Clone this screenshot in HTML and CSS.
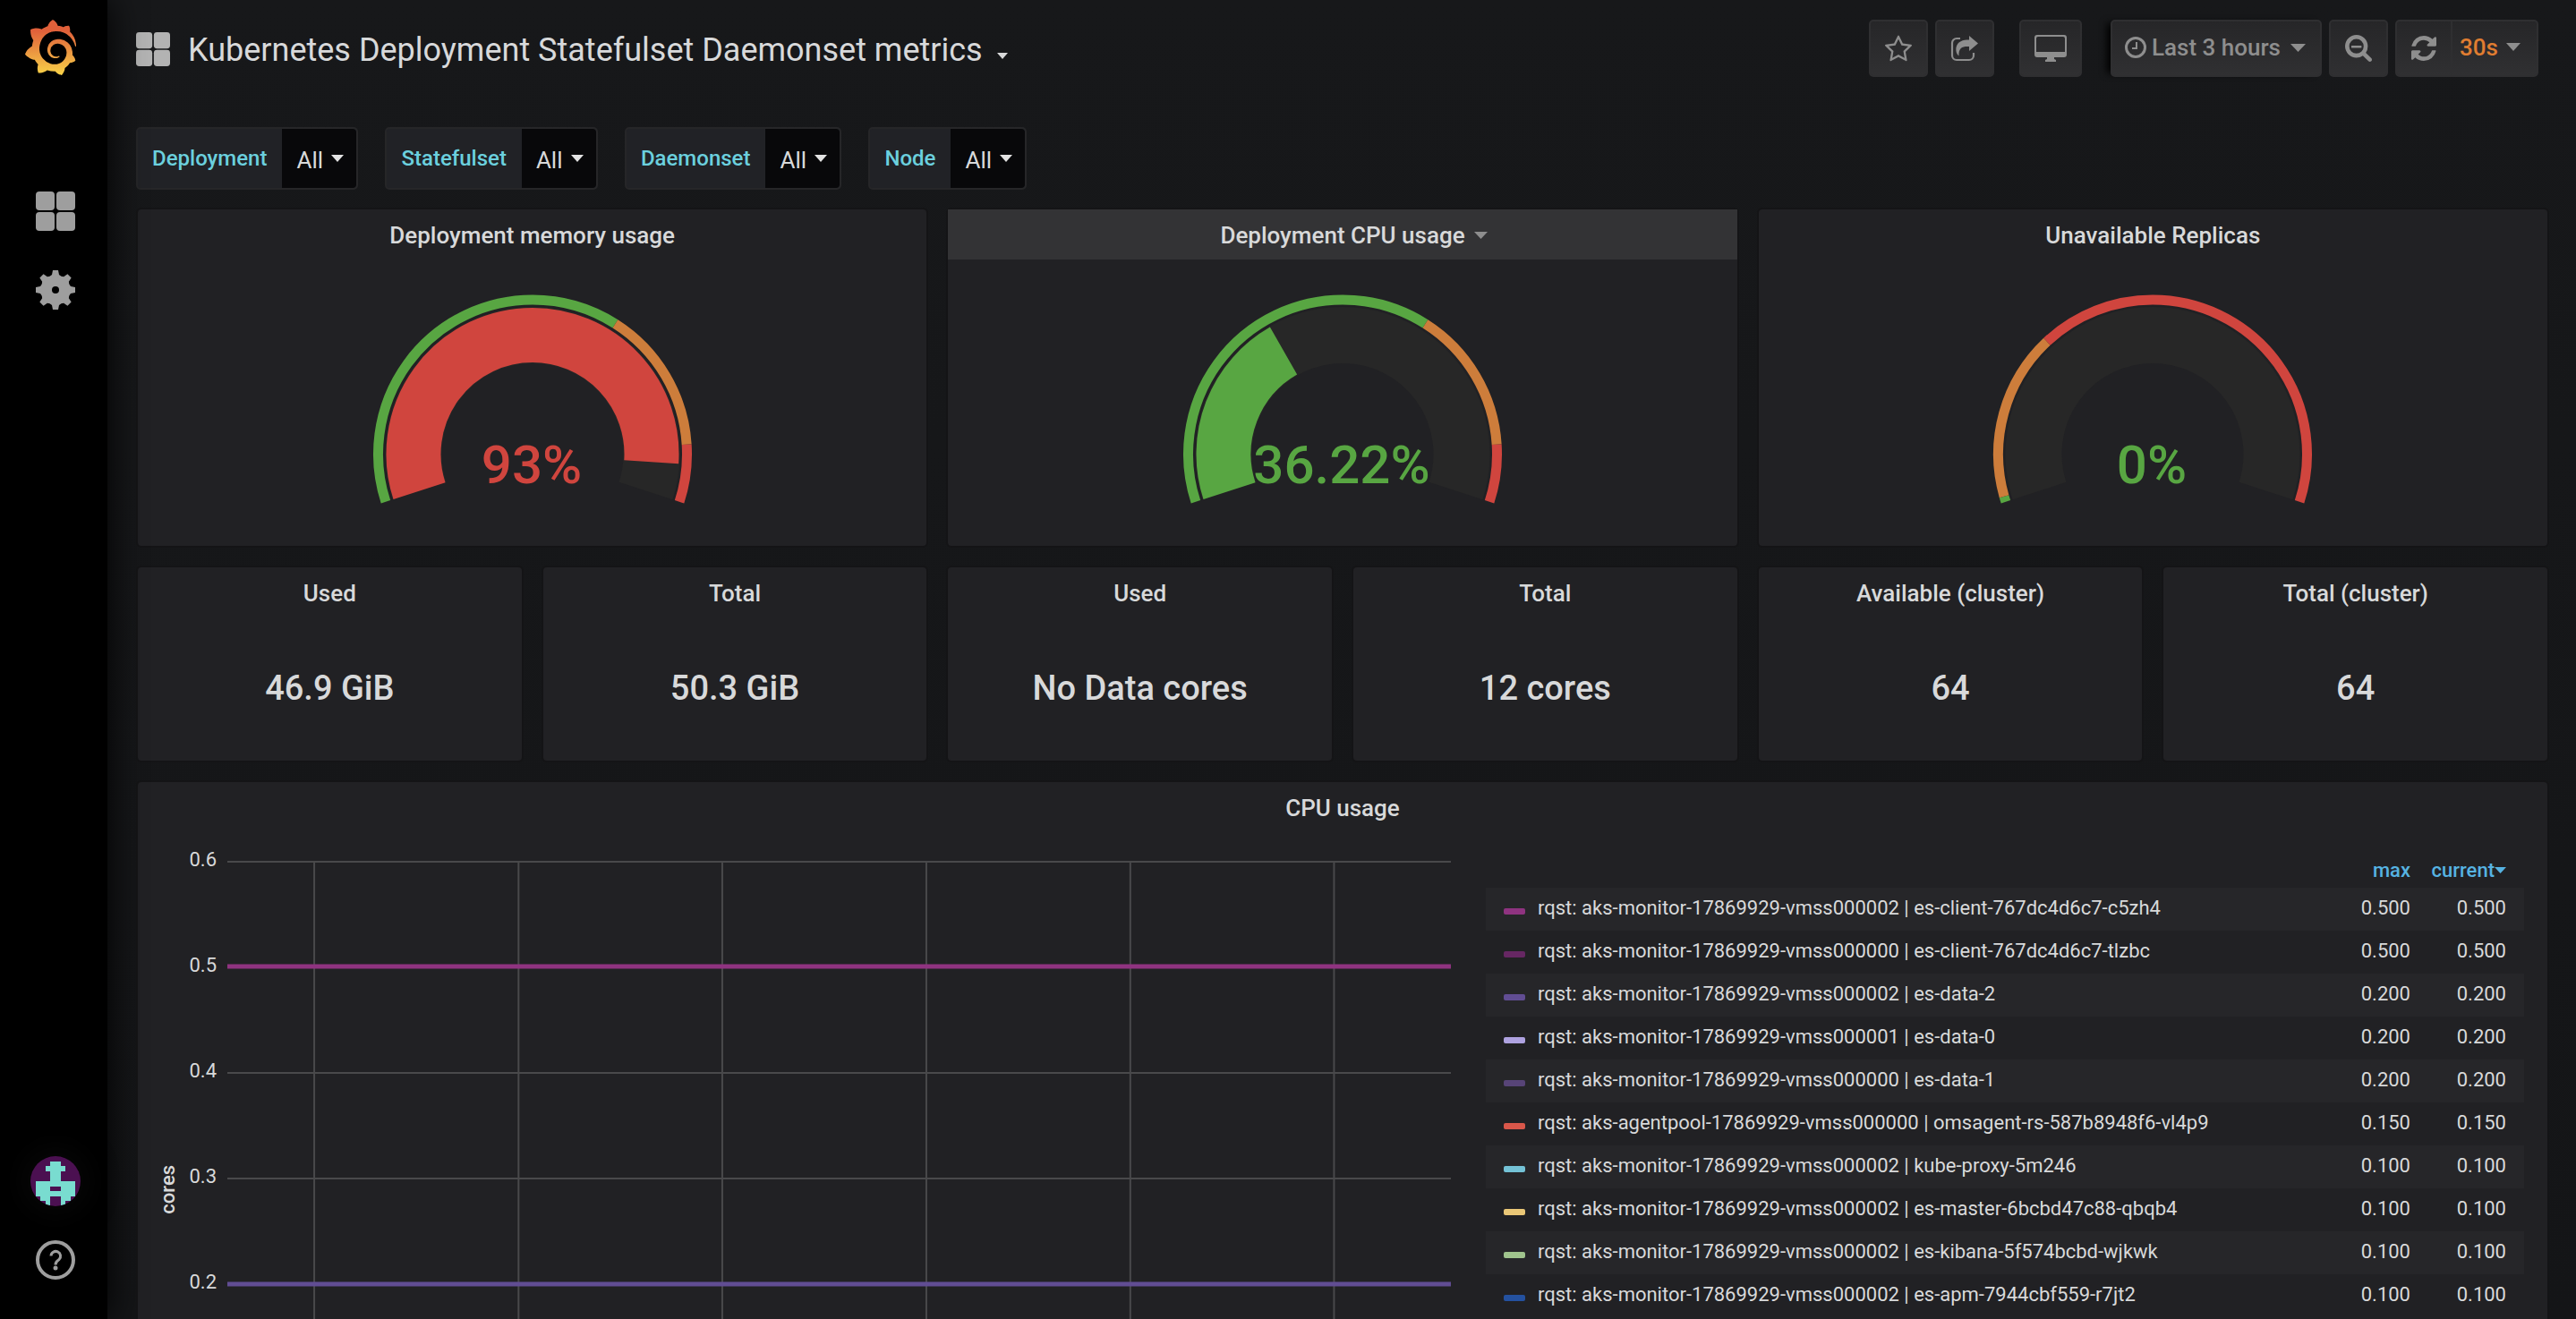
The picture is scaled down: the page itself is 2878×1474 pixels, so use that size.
FILE: index.html
```html
<!DOCTYPE html>
<html lang="en">
<head>
<meta charset="utf-8">
<title>Kubernetes Deployment Statefulset Daemonset metrics</title>
<link rel="stylesheet" href="styles.css">
</head>
<body>
<svg class="defs" aria-hidden="true">
  <symbol id="caret" viewBox="0 0 16 8" preserveAspectRatio="none"><path d="M0 0h16L8 8z"/></symbol>
  <symbol id="apps" viewBox="0 0 44 44"><rect width="21" height="21" rx="4"/><rect x="23" width="21" height="21" rx="4"/><rect y="23" width="21" height="21" rx="4"/><rect x="23" y="23" width="21" height="21" rx="4"/></symbol>
</svg>
<div class="app">
  <nav class="sidebar" aria-label="Main">
    <a href="#" class="side-link logo" aria-label="Home">
      <svg width="57" height="62" viewBox="0.95 0 22.1 24">
        <defs><linearGradient id="flame" x1="0" y1="0" x2="0" y2="1"><stop offset="0.2" stop-color="#e0603a"/><stop offset="1" stop-color="#f8d248"/></linearGradient></defs>
        <path fill="url(#flame)" d="M23.02 10.59a8.578 8.578 0 0 0-.862-3.034 8.911 8.911 0 0 0-1.789-2.445c.337-1.342-.413-2.505-.413-2.505-1.292-.08-2.113.4-2.416.62-.052-.02-.102-.044-.154-.064-.22-.089-.446-.172-.677-.247-.231-.073-.47-.14-.711-.197a9.867 9.867 0 0 0-.875-.161C14.557.753 12.94 0 12.94 0c-1.804 1.145-2.147 2.744-2.147 2.744l-.018.093c-.098.029-.2.057-.298.088-.138.042-.275.094-.413.143-.138.055-.275.107-.41.166a8.869 8.869 0 0 0-1.557.87l-.063-.029c-2.497-.955-4.716.195-4.716.195-.203 2.658.996 4.33 1.235 4.636a11.608 11.608 0 0 0-.607 2.635C1.636 12.677.953 15.014.953 15.014c1.926 2.214 4.171 2.351 4.171 2.351.003-.002.006-.002.006-.005.285.509.615.994.986 1.446.156.19.32.371.488.548-.704 2.009.099 3.68.099 3.68 2.144.08 3.553-.937 3.849-1.173a9.784 9.784 0 0 0 3.164.501h.08l.055-.003.107-.002.103-.005.003.002c1.01 1.44 2.788 1.646 2.788 1.646 1.264-1.332 1.337-2.653 1.337-2.94v-.058c0-.02-.003-.039-.003-.06.265-.187.52-.387.758-.6a7.875 7.875 0 0 0 1.415-1.7c1.43.083 2.437-.885 2.437-.885-.236-1.49-1.085-2.216-1.264-2.354l-.018-.013-.016-.013a.217.217 0 0 1-.031-.02c.008-.092.016-.18.02-.27.011-.162.016-.323.016-.48v-.253l-.005-.098-.008-.135a1.891 1.891 0 0 0-.01-.13c-.003-.042-.008-.083-.013-.125l-.016-.124-.018-.122a6.215 6.215 0 0 0-2.032-3.73 6.015 6.015 0 0 0-3.222-1.46 6.292 6.292 0 0 0-.85-.048l-.107.002h-.063l-.044.003-.104.008a4.777 4.777 0 0 0-3.335 1.695c-.332.4-.592.84-.768 1.297a4.594 4.594 0 0 0-.312 1.817l.003.091c.005.055.007.11.013.164a3.615 3.615 0 0 0 .698 1.82 3.53 3.53 0 0 0 1.827 1.282c.33.098.66.14.971.137.039 0 .078 0 .114-.002l.063-.003c.02 0 .041-.003.062-.003.034-.002.065-.007.099-.01.007 0 .018-.003.028-.003l.031-.005.06-.008a1.18 1.18 0 0 0 .112-.02c.036-.008.072-.013.109-.024a2.634 2.634 0 0 0 .914-.415c.028-.02.056-.041.085-.065a.248.248 0 0 0 .039-.35.244.244 0 0 0-.309-.06l-.078.042c-.09.044-.184.083-.283.116a2.476 2.476 0 0 1-.475.096c-.028.003-.054.006-.083.006l-.083.002c-.026 0-.054 0-.08-.002l-.102-.006h-.012l-.024.006c-.016-.003-.031-.003-.044-.006-.031-.002-.06-.007-.091-.01a2.59 2.59 0 0 1-.724-.213 2.557 2.557 0 0 1-.667-.438 2.52 2.52 0 0 1-.805-1.475 2.306 2.306 0 0 1-.029-.444l.006-.122v-.023l.002-.031c.003-.021.003-.04.005-.06a3.163 3.163 0 0 1 1.352-2.29 3.12 3.12 0 0 1 .937-.43 2.946 2.946 0 0 1 .776-.101h.06l.07.002.045.003h.026l.07.005a4.041 4.041 0 0 1 1.635.49 3.94 3.94 0 0 1 1.602 1.662 3.77 3.77 0 0 1 .397 1.414l.005.076.003.075c.002.026.002.05.002.075 0 .024.003.052 0 .07v.065l-.002.073-.008.174a6.195 6.195 0 0 1-.08.639 5.1 5.1 0 0 1-.267.927 5.31 5.31 0 0 1-.624 1.13 5.052 5.052 0 0 1-3.237 2.014 4.82 4.82 0 0 1-.649.066l-.039.003h-.287a6.607 6.607 0 0 1-1.716-.265 6.776 6.776 0 0 1-3.4-2.274 6.75 6.75 0 0 1-.746-1.15 6.616 6.616 0 0 1-.714-2.596l-.005-.083-.002-.02v-.056l-.003-.073v-.096l-.003-.104v-.07l.003-.163c.008-.22.026-.45.054-.678a8.707 8.707 0 0 1 .28-1.355c.128-.444.286-.872.473-1.277a7.04 7.04 0 0 1 1.456-2.1 5.925 5.925 0 0 1 .953-.763c.169-.111.343-.213.524-.306.089-.05.182-.091.273-.135.047-.02.093-.042.138-.062a7.177 7.177 0 0 1 .714-.267l.145-.045c.049-.015.098-.026.148-.041.098-.029.197-.052.296-.076.049-.013.1-.02.15-.033l.15-.032.151-.028.076-.013.075-.01.153-.024c.057-.01.114-.013.171-.023l.169-.021c.036-.003.073-.008.106-.01l.073-.008.036-.003.042-.002c.057-.003.114-.008.171-.01l.086-.006h.023l.037-.003.145-.007a7.999 7.999 0 0 1 1.708.125 7.917 7.917 0 0 1 2.048.68 8.253 8.253 0 0 1 1.672 1.09l.09.077.089.078c.06.052.114.107.171.159.057.052.112.106.166.16.052.055.107.107.159.164a8.671 8.671 0 0 1 1.41 1.978c.012.026.028.052.04.078l.04.078.075.156c.023.051.05.1.07.153l.065.15a8.848 8.848 0 0 1 .45 1.34.19.19 0 0 0 .201.142.186.186 0 0 0 .172-.184c.01-.246.002-.532-.024-.856z"/>
      </svg>
    </a>
    <a href="#" class="side-link" aria-label="Dashboards"><svg width="44" height="44"><use href="#apps"/></svg></a>
    <a href="#" class="side-link" aria-label="Configuration">
      <svg width="44" height="44" viewBox="-22 -22 44 44">
        <defs><path id="teeth" d="M-3 -22H3L4 -17L8 -14V14L4 17L3 22H-3L-4 17L-8 14V-14L-4 -17Z"/></defs>
        <use href="#teeth"/><use href="#teeth" transform="rotate(45)"/><use href="#teeth" transform="rotate(90)"/><use href="#teeth" transform="rotate(135)"/>
        <circle r="4" fill="#000"/>
      </svg>
    </a>
    <span class="side-spacer"></span>
    <a href="#" class="side-link avatar" aria-label="Profile">
      <svg width="56" height="56" viewBox="0 0 10 10" shape-rendering="crispEdges">
        <rect width="10" height="10" fill="#4b1051"/>
        <path fill="#79dcd0" fill-rule="evenodd" d="M4 1h2v1h1v1H6v2h3v3H8v1H7v1H6V8H4v2H3V9H2V8H1V5h3V3H3V2h1zM4 6v1h2V6z"/>
      </svg>
    </a>
    <a href="#" class="side-link" aria-label="Help">
      <svg width="44" height="44" viewBox="0 0 44 44">
        <g fill="none" stroke="#9e9e9e" stroke-width="4"><circle cx="22" cy="22" r="20"/><path stroke-width="3" d="M17 17.500a5.300 5.300 0 1 1 9 4c-2.500 1.800-4 2.500-4 6"/></g>
        <circle cx="22" cy="31" r="2.500"/>
      </svg>
    </a>
  </nav>

  <main class="main">
    <header class="navbar">
      <svg class="nav-icon" width="38" height="38"><use href="#apps"/></svg>
      <h1 class="page-title"><button type="button" class="title-button">Kubernetes Deployment Statefulset Daemonset metrics<svg class="title-caret" width="12" height="7"><use href="#caret"/></svg></button></h1>
      <div class="toolbar">
        <button type="button" class="tool" aria-label="Star"><svg width="30" height="30" viewBox="0 0 1664 1664"><path d="M1137 1004l306-297-422-62-189-382-189 382-422 62 306 297-73 421 378-199 377 199zm527-357q0 22-26 48l-363 354 86 500q1 7 1 20 0 50-41 50-19 0-40-12l-449-236-449 236q-22 12-40 12-21 0-31.500-14.500t-10.500-35.500q0-6 2-20l86-500-364-354q-25-27-25-48 0-37 56-46l502-73 225-455q19-41 49-41t49 41l225 455 502 73q56 9 56 46z"/></svg></button>
        <button type="button" class="tool" aria-label="Share"><svg width="31" height="30" viewBox="0 0 31 30"><path fill="none" stroke="#8e8e8e" stroke-width="2.200" d="M11 4H7a5 5 0 0 0-5 5v14a5 5 0 0 0 5 5h14a5 5 0 0 0 5-5v-3"/><path d="M21 1l10 8.500L21 18v-5c-7-.5-12 1-11.500 10.500C6.500 21 6 17 6.500 14 8 7 14 5.500 21 5.500z"/></svg></button>
        <button type="button" class="tool tool-tv" aria-label="Cycle view mode"><svg width="36" height="32" viewBox="0 0 36 32"><path fill-rule="evenodd" d="M3 1h30a3 3 0 0 1 3 3v19a3 3 0 0 1-3 3H22v2l2 1v2H12v-2l2-1v-2H3a3 3 0 0 1-3-3V4a3 3 0 0 1 3-3zM4 3a2 2 0 0 0-2 2v15h32V5a2 2 0 0 0-2-2z"/></svg></button>
        <button type="button" class="tool tool-time"><svg width="24" height="24" viewBox="0 0 24 24"><g fill="none" stroke="#8e8e8e"><circle cx="12" cy="12" r="10.500" stroke-width="3"/><path stroke-width="2" d="M13 6v7H8"/></g></svg><span class="time-text">Last 3 hours</span><svg class="tool-caret" width="17" height="9"><use href="#caret"/></svg></button>
        <button type="button" class="tool" aria-label="Zoom out"><svg width="30" height="30" viewBox="0 0 1664 1664"><path d="M1024 704v64q0 13-9.500 22.500t-22.500 9.500h-576q-13 0-22.500-9.500t-9.500-22.500v-64q0-13 9.500-22.500t22.500-9.500h576q13 0 22.500 9.500t9.500 22.500zm128 0q0-185-131.500-316.500t-316.500-131.500-316.500 131.500-131.500 316.500 131.500 316.500 316.500 131.500 316.500-131.500 131.500-316.500zm512 832q0 53-37.500 90.500t-90.500 37.500q-54 0-90-38l-343-342q-179 124-399 124-143 0-273.500-55.500t-225-150-150-225-55.500-273.500 55.500-273.500 150-225 225-150 273.500-55.500 273.500 55.500 225 150 150 225 55.500 273.500q0 220-124 399l343 343q37 37 37 90z"/></svg></button>
        <div class="refresh">
          <button type="button" class="refresh-button" aria-label="Refresh"><svg width="28" height="28" viewBox="0 0 1536 1536"><path d="M1511 928q0 5-1 7-64 268-268 434.500t-478 166.500q-146 0-282.500-55t-243.500-157l-129 129q-19 19-45 19t-45-19-19-45v-448q0-26 19-45t45-19h448q26 0 45 19t19 45-19 45l-137 137q71 66 161 102t187 36q134 0 250-65t186-179q11-17 53-117 8-23 30-23h192q13 0 22.500 9.500t9.500 22.500zm25-800v448q0 26-19 45t-45 19h-448q-26 0-45-19t-19-45 19-45l138-138q-148-137-349-137-134 0-250 65t-186 179q-11 17-53 117-8 23-30 23h-199q-13 0-22.500-9.500t-9.500-22.500v-7q65-268 270-434.500t480-166.500q146 0 284 55.500t245 156.500l130-129q19-19 45-19t45 19 19 45z"/></svg></button>
          <span class="picker"><select class="interval" aria-label="Refresh interval"><option>30s</option></select><svg class="picker-caret" width="16" height="9"><use href="#caret"/></svg></span>
        </div>
      </div>
    </header>

    <form class="filters">
      <div class="filter"><label class="filter-label" for="f-deployment">Deployment</label><span class="picker"><select class="filter-value" id="f-deployment"><option>All</option></select><svg class="picker-caret" width="14" height="8"><use href="#caret"/></svg></span></div>
      <div class="filter"><label class="filter-label" for="f-statefulset">Statefulset</label><span class="picker"><select class="filter-value" id="f-statefulset"><option>All</option></select><svg class="picker-caret" width="14" height="8"><use href="#caret"/></svg></span></div>
      <div class="filter"><label class="filter-label" for="f-daemonset">Daemonset</label><span class="picker"><select class="filter-value" id="f-daemonset"><option>All</option></select><svg class="picker-caret" width="14" height="8"><use href="#caret"/></svg></span></div>
      <div class="filter"><label class="filter-label" for="f-node">Node</label><span class="picker"><select class="filter-value" id="f-node"><option>All</option></select><svg class="picker-caret" width="14" height="8"><use href="#caret"/></svg></span></div>
    </form>

    <div class="dashboard">
      <section class="panel panel-third">
        <h2 class="panel-title">Deployment memory usage</h2>
        <svg class="gauge" viewBox="0 0 360 236" role="img" aria-label="93%">
          <path class="track" d="M53.510 221.600A133 133 0 1 1 306.490 221.600"/>
          <path class="bar red" pathLength="100" stroke-dasharray="93.400 100" d="M53.510 221.600A133 133 0 1 1 306.490 221.600"/>
          <path class="ring green" pathLength="100" stroke-dasharray="65 100" d="M15.940 233.810A172.500 172.500 0 1 1 344.060 233.810"/>
          <path class="ring orange" pathLength="100" stroke-dasharray="0 65 25 100" d="M15.940 233.810A172.500 172.500 0 1 1 344.060 233.810"/>
          <path class="ring red" pathLength="100" stroke-dasharray="0 90 10 100" d="M15.940 233.810A172.500 172.500 0 1 1 344.060 233.810"/>
          <text class="gauge-text red-text" x="179" y="213">93%</text>
        </svg>
      </section>
      <section class="panel panel-third">
        <h2 class="panel-title panel-title-active">Deployment CPU usage<svg class="panel-caret" width="15" height="8"><use href="#caret"/></svg></h2>
        <svg class="gauge" viewBox="0 0 360 236" role="img" aria-label="36.22%">
          <path class="track" d="M53.510 221.600A133 133 0 1 1 306.490 221.600"/>
          <path class="bar green" pathLength="100" stroke-dasharray="36.220 100" d="M53.510 221.600A133 133 0 1 1 306.490 221.600"/>
          <path class="ring green" pathLength="100" stroke-dasharray="65 100" d="M15.940 233.810A172.500 172.500 0 1 1 344.060 233.810"/>
          <path class="ring orange" pathLength="100" stroke-dasharray="0 65 25 100" d="M15.940 233.810A172.500 172.500 0 1 1 344.060 233.810"/>
          <path class="ring red" pathLength="100" stroke-dasharray="0 90 10 100" d="M15.940 233.810A172.500 172.500 0 1 1 344.060 233.810"/>
          <text class="gauge-text green-text" x="179" y="213">36.22%</text>
        </svg>
      </section>
      <section class="panel panel-third">
        <h2 class="panel-title">Unavailable Replicas</h2>
        <svg class="gauge" viewBox="0 0 360 236" role="img" aria-label="0%">
          <path class="track" d="M53.510 221.600A133 133 0 1 1 306.490 221.600"/>
          <path class="ring green" pathLength="100" stroke-dasharray="1 100" d="M15.940 233.810A172.500 172.500 0 1 1 344.060 233.810"/>
          <path class="ring orange" pathLength="100" stroke-dasharray="0 1 29 100" d="M15.940 233.810A172.500 172.500 0 1 1 344.060 233.810"/>
          <path class="ring red" pathLength="100" stroke-dasharray="0 30 70 100" d="M15.940 233.810A172.500 172.500 0 1 1 344.060 233.810"/>
          <text class="gauge-text green-text" x="179" y="213">0%</text>
        </svg>
      </section>

      <section class="panel"><h2 class="panel-title">Used</h2><p class="stat">46.9 GiB</p></section>
      <section class="panel"><h2 class="panel-title">Total</h2><p class="stat">50.3 GiB</p></section>
      <section class="panel"><h2 class="panel-title">Used</h2><p class="stat">No Data cores</p></section>
      <section class="panel"><h2 class="panel-title">Total</h2><p class="stat">12 cores</p></section>
      <section class="panel"><h2 class="panel-title">Available (cluster)</h2><p class="stat">64</p></section>
      <section class="panel"><h2 class="panel-title">Total (cluster)</h2><p class="stat">64</p></section>

      <section class="panel panel-full">
        <h2 class="panel-title">CPU usage</h2>
        <div class="graph-body">
          <div class="chart">
            <span class="axis-name">cores</span>
            <ul class="ticks"><li>0.6</li><li>0.5</li><li>0.4</li><li>0.3</li><li>0.2</li></ul>
            <svg class="plot" role="img" aria-label="CPU usage in cores">
              <g class="grid-lines">
                <path d="M0 2H4000M0 120H4000M0 238H4000M0 356H4000M0 474H4000M0 592H4000M0 710H4000"/>
                <line x1="7.100%" x2="7.100%" y1="2" y2="710"/><line x1="23.800%" x2="23.800%" y1="2" y2="710"/><line x1="40.450%" x2="40.450%" y1="2" y2="710"/><line x1="57.130%" x2="57.130%" y1="2" y2="710"/><line x1="73.800%" x2="73.800%" y1="2" y2="710"/><line x1="90.450%" x2="90.450%" y1="2" y2="710"/>
              </g>
              <line class="series" stroke="#8f3380" x1="0" x2="100%" y1="119" y2="119"/>
              <line class="series" stroke="#614d93" x1="0" x2="100%" y1="474" y2="474"/>
            </svg>
          </div>
          <table class="legend">
            <thead><tr><th></th><th class="num"><button type="button" class="sort">max</button></th><th class="num last"><button type="button" class="sort">current<svg class="sort-caret" width="13" height="7"><use href="#caret"/></svg></button></th></tr></thead>
            <tbody>
              <tr><td><i class="swatch" style="background:#8f3380"></i>rqst: aks-monitor-17869929-vmss000002 | es-client-767dc4d6c7-c5zh4</td><td class="num">0.500</td><td class="num last">0.500</td></tr>
              <tr><td><i class="swatch" style="background:#662763"></i>rqst: aks-monitor-17869929-vmss000000 | es-client-767dc4d6c7-tlzbc</td><td class="num">0.500</td><td class="num last">0.500</td></tr>
              <tr><td><i class="swatch" style="background:#614d93"></i>rqst: aks-monitor-17869929-vmss000002 | es-data-2</td><td class="num">0.200</td><td class="num last">0.200</td></tr>
              <tr><td><i class="swatch" style="background:#aea2e0"></i>rqst: aks-monitor-17869929-vmss000001 | es-data-0</td><td class="num">0.200</td><td class="num last">0.200</td></tr>
              <tr><td><i class="swatch" style="background:#574477"></i>rqst: aks-monitor-17869929-vmss000000 | es-data-1</td><td class="num">0.200</td><td class="num last">0.200</td></tr>
              <tr><td><i class="swatch" style="background:#d9574a"></i>rqst: aks-agentpool-17869929-vmss000000 | omsagent-rs-587b8948f6-vl4p9</td><td class="num">0.150</td><td class="num last">0.150</td></tr>
              <tr><td><i class="swatch" style="background:#74c2d6"></i>rqst: aks-monitor-17869929-vmss000002 | kube-proxy-5m246</td><td class="num">0.100</td><td class="num last">0.100</td></tr>
              <tr><td><i class="swatch" style="background:#eac777"></i>rqst: aks-monitor-17869929-vmss000002 | es-master-6bcbd47c88-qbqb4</td><td class="num">0.100</td><td class="num last">0.100</td></tr>
              <tr><td><i class="swatch" style="background:#a0c48d"></i>rqst: aks-monitor-17869929-vmss000002 | es-kibana-5f574bcbd-wjkwk</td><td class="num">0.100</td><td class="num last">0.100</td></tr>
              <tr><td><i class="swatch" style="background:#24519f"></i>rqst: aks-monitor-17869929-vmss000002 | es-apm-7944cbf559-r7jt2</td><td class="num">0.100</td><td class="num last">0.100</td></tr>
            </tbody>
          </table>
        </div>
      </section>
    </div>
  </main>
</div>
</body>
</html>
```
FILE: styles.css
```css
* { box-sizing: border-box; }
body {
  margin: 0;
  background: #161719;
  color: #d8d9da;
  font-family: Roboto, "Liberation Sans", sans-serif;
  font-size: 22px;
}
h1, h2, p, ul { margin: 0; padding: 0; }
ul { list-style: none; }
button, select { font: inherit; color: inherit; margin: 0; padding: 0; border: 0; background: none; appearance: none; }
svg { display: block; flex: none; fill: currentColor; }
.defs { position: absolute; width: 0; height: 0; }

.app { display: flex; height: 100vh; overflow: hidden; }

/* Side menu */
.sidebar {
  display: flex;
  flex: none;
  flex-direction: column;
  align-items: center;
  width: 120px;
  padding: 22px 0 44px 4px;
  gap: 44px;
  background: #000;
  color: #9e9e9e;
  box-shadow: 0 0 40px #000;
  z-index: 1;
}
.side-link { display: block; color: inherit; }
.logo { margin: 0 12px 86px 0; }
.side-spacer { flex: 1; }
.avatar { border-radius: 50%; overflow: hidden; margin-bottom: -6px; box-shadow: 0 0 28px 12px #060606; }

/* Top bar */
.main {
  flex: 1;
  min-width: 0;
  overflow-y: auto;
  scrollbar-width: none;
  padding: 0 32px 32px 34px;
  background: linear-gradient(#17181a, #141517);
}
.navbar { display: flex; align-items: center; height: 108px; padding-right: 10px; margin-left: -2px; }
.nav-icon { margin-top: 2px; color: #b3b3b3; }
.page-title { flex: 1; margin-left: 20px; padding-top: 4px; font-size: 36px; font-weight: 400; line-height: 44px; }
.title-button { display: flex; align-items: center; gap: 16px; }
.title-caret { margin-top: 12px; }
.toolbar { display: flex; gap: 8px; color: #8e8e8e; }
.tool, .refresh {
  display: flex;
  align-items: center;
  justify-content: center;
  height: 64px;
  min-width: 66px;
  border: 2px solid #2f2f31;
  border-radius: 5px;
  background: linear-gradient(#262628, #303032);
}
.tool-tv { min-width: 70px; margin: 0 24px 0 20px; }
.tool-time { padding: 0 16px 2px 14px; box-shadow: -8px 0 8px -4px #000; }
.time-text { margin: 0 11px 0 6px; }
.tool-time, .interval { font-size: 26px; font-weight: 500; }
.refresh-button { display: flex; align-items: center; justify-content: center; width: 62px; height: 60px; border-right: 2px solid #2f2f31; }
.picker { display: grid; align-items: center; }
.picker > * { grid-area: 1 / 1; }
.picker-caret { justify-self: end; margin-right: 14px; pointer-events: none; }
.interval { height: 60px; padding: 0 43px 2px 8px; color: #e07d31; }
.refresh .picker-caret { margin: 0 18px 4px 0; }

/* Template variables */
.filters { display: flex; gap: 30px; margin: 34px 0 22px -2px; }
.filter { display: flex; height: 70px; border: 2px solid #262628; border-radius: 5px; background: #212226; overflow: hidden; }
.filter-label { padding: 0 17px 0 16px; font-size: 24px; font-weight: 500; line-height: 67px; color: #6bd0de; }
.filter-value { height: 66px; padding: 4px 37px 0 16px; border-radius: 0 4px 4px 0; background: #08080a; font-size: 26px; }
.filter .picker-caret { color: #e3e3e3; }

/* Dashboard grid */
.dashboard { display: grid; grid-template-columns: repeat(6, 1fr); gap: 24px; }
.panel { border-radius: 4px; background: #212124; box-shadow: 0 0 0 2px #141416; }
.panel-third { grid-column: span 2; }
.panel-full { grid-column: 1 / -1; }
.panel-title { display: flex; align-items: center; justify-content: center; height: 56px; padding-top: 2px; font-size: 26px; font-weight: 500; }
.panel-title-active { padding-left: 25px; background: #333335; }
.panel-caret { margin: 0 0 0 10px; color: #8e8e8e; }

.gauge { width: 360px; margin: 37px auto 47px; overflow: visible; }
.track, .bar, .ring { fill: none; }
.track { stroke: #272727; stroke-width: 63px; }
.bar { stroke-width: 61px; }
.ring { stroke-width: 11px; }
.red { stroke: #d0453e; }
.green { stroke: #58a642; }
.orange { stroke: #cd7d3b; }
.gauge-text { font-size: 60px; font-weight: 500; text-anchor: middle; }
.red-text { fill: #d0453e; }
.green-text { fill: #58a642; }

.stat { height: 160px; font-size: 38px; font-weight: 500; line-height: 158px; text-align: center; }

/* Graph panel */
.graph-body { display: grid; grid-template-columns: 1447fr 1160fr; gap: 39px; align-items: start; padding: 0 26px 32px 20px; }
.chart { display: flex; padding-top: 20px; line-height: 22px; }
.axis-name { align-self: center; width: 28px; padding-bottom: 32px; writing-mode: vertical-rl; transform: rotate(180deg); line-height: 28px; font-weight: 500; text-align: center; }
.ticks { width: 40px; margin-right: 12px; text-align: right; }
.ticks li { height: 118px; }
.plot { flex: 1; width: 0; height: 716px; margin-top: 11px; overflow: hidden; }
.grid-lines { fill: none; stroke: #49494b; stroke-width: 2px; }
.series { stroke-width: 5px; }

.legend { width: 100%; margin-top: 18px; border-collapse: collapse; white-space: nowrap; }
.legend th { height: 44px; padding: 4px 0 0; font-weight: 500; color: #56b3e2; }
.legend td { height: 48px; padding: 0 0 4px 20px; }
.legend tbody tr:nth-child(odd) { background: #262629; }
.legend .num { width: 120px; padding-left: 0; text-align: right; }
.legend .last { width: 127px; padding-right: 20px; }
.sort { display: inline-flex; align-items: center; }
.swatch { display: inline-block; width: 24px; height: 7px; margin-right: 14px; border-radius: 2px; }
```
